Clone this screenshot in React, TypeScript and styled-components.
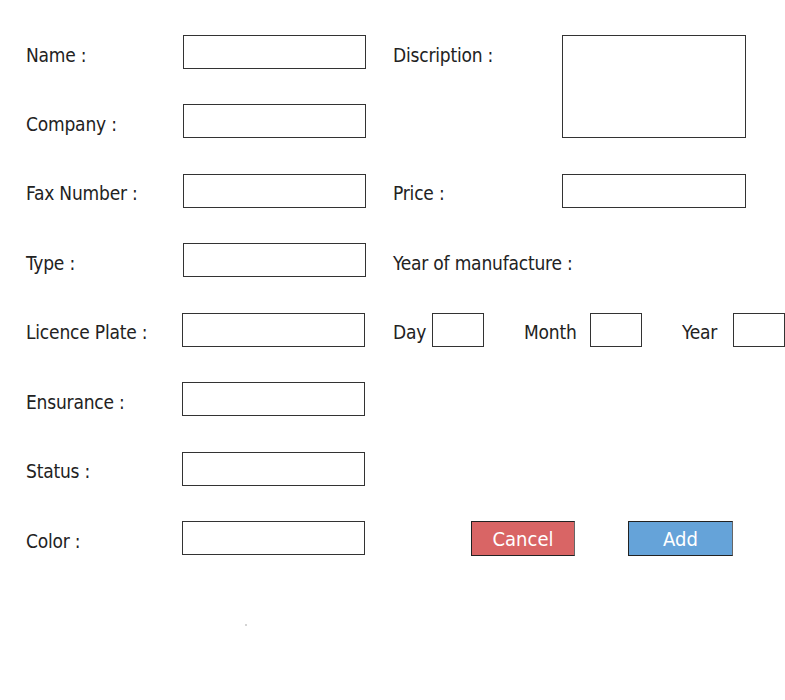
import { Fragment } from "react";
import styled, { createGlobalStyle } from "styled-components";

const GlobalStyle = createGlobalStyle`
  html, body {
    margin: 0;
    padding: 0;
    background: #ffffff;
  }
  body {
    font-family: "DejaVu Sans Condensed", "DejaVu Sans", sans-serif;
    color: #222222;
  }
`;

const Page = styled.div`
  width: 785px;
  height: 700px;
  padding-top: 35px;
  box-sizing: border-box;
  overflow: hidden;
`;

const FormGrid = styled.div`
  display: grid;
  padding-left: 26px;
  grid-template-columns: 157px 183px 27px 169px 1fr;
  grid-auto-rows: 34px;
  row-gap: 35.45px;
`;

const Label = styled.label<{ $col: number; $row: number }>`
  grid-column: ${(p) => p.$col};
  grid-row: ${(p) => p.$row};
  display: flex;
  align-items: center;
  padding-top: 5px;
  font-size: 19px;
  letter-spacing: -0.2px;
  white-space: nowrap;
`;

const Field = styled.input<{ $col: number; $row: number; $nudge?: boolean; $wide?: boolean }>`
  grid-column: ${(p) => p.$col};
  grid-row: ${(p) => p.$row};
  width: ${(p) => (p.$wide ? 184 : 183)}px;
  height: 100%;
  box-sizing: border-box;
  margin: 0 0 0 ${(p) => (p.$nudge ? -1 : 0)}px;
  padding: 0 6px;
  border: 1px solid #333;
  border-radius: 0;
  background: #fff;
  font: inherit;
`;

const TextBox = styled.textarea`
  grid-column: 5;
  grid-row: 1 / span 2;
  width: 184px;
  height: 100%;
  box-sizing: border-box;
  margin: 0;
  border: 1px solid #333;
  border-radius: 0;
  resize: none;
  font: inherit;
`;

const DateRow = styled.div`
  grid-column: 4 / span 2;
  grid-row: 5;
  display: flex;
  align-items: stretch;
`;

const DatePart = styled.div<{ $width: number }>`
  display: flex;
  align-items: stretch;
  width: ${(p) => p.$width}px;
  flex-shrink: 0;
`;

const DateLabel = styled.span<{ $gap: number }>`
  display: flex;
  align-items: center;
  padding-top: 5px;
  margin-right: ${(p) => p.$gap}px;
  font-size: 19px;
  letter-spacing: -0.2px;
`;

const SmallBox = styled.input`
  width: 52px;
  height: 100%;
  box-sizing: border-box;
  margin: 0;
  border: 1px solid #333;
  border-radius: 0;
  font: inherit;
`;

const ButtonRow = styled.div`
  grid-column: 4 / span 2;
  grid-row: 8;
  display: flex;
  padding-left: 78px;
  gap: 53px;
`;

const ActionButton = styled.button<{ $color: string; $width: number }>`
  width: ${(p) => p.$width}px;
  height: 35px;
  box-sizing: border-box;
  border: 1px solid #222;
  border-right-color: #666;
  border-radius: 0;
  background: ${(p) => p.$color};
  color: #ffffff;
  font-family: inherit;
  font-size: 20px;
  padding: 0;
  cursor: pointer;
`;

const Speck = styled.div`
  width: 2px;
  height: 2px;
  margin: 69px 0 0 245px;
  background: #d4d4d4;
`;

const leftFields = [
  "Name :",
  "Company :",
  "Fax Number :",
  "Type :",
  "Licence Plate :",
  "Ensurance :",
  "Status :",
  "Color :",
];

export default function App() {
  return (
    <Page>
      <GlobalStyle />
      <FormGrid>
        {leftFields.map((label, i) => (
          <Fragment key={label}>
            <Label $col={1} $row={i + 1}>
              {label}
            </Label>
            <Field $col={2} $row={i + 1} $nudge={i >= 4} />
          </Fragment>
        ))}

        <Label $col={4} $row={1}>
          Discription :
        </Label>
        <TextBox />

        <Label $col={4} $row={3}>
          Price :
        </Label>
        <Field $col={5} $row={3} $wide />

        <Label $col={4} $row={4}>
          Year of manufacture :
        </Label>

        <DateRow>
          <DatePart $width={131}>
            <DateLabel $gap={6}>Day</DateLabel>
            <SmallBox />
          </DatePart>
          <DatePart $width={158}>
            <DateLabel $gap={13}>Month</DateLabel>
            <SmallBox />
          </DatePart>
          <DatePart $width={103}>
            <DateLabel $gap={16}>Year</DateLabel>
            <SmallBox />
          </DatePart>
        </DateRow>

        <ButtonRow>
          <ActionButton $color="#d96565" $width={104}>
            Cancel
          </ActionButton>
          <ActionButton $color="#65a3d9" $width={105}>
            Add
          </ActionButton>
        </ButtonRow>
      </FormGrid>
      <Speck />
    </Page>
  );
}
